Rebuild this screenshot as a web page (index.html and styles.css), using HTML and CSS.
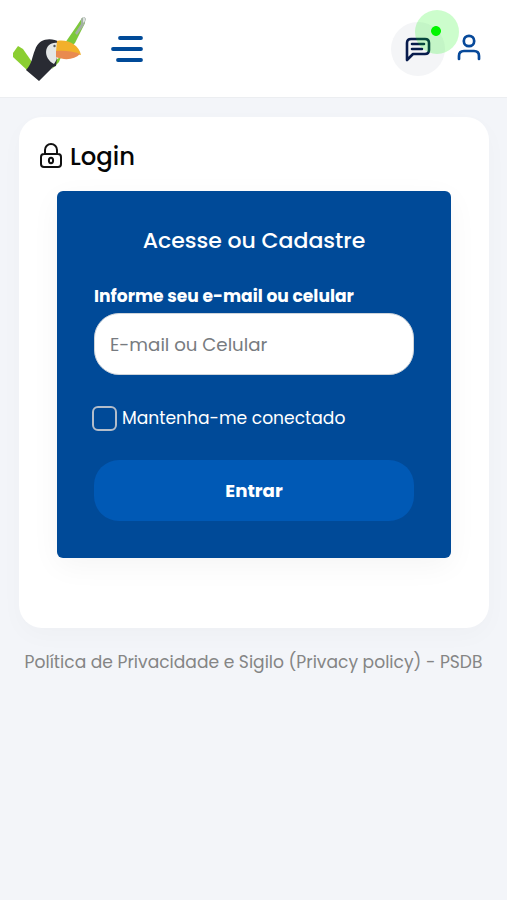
FILE: index.html
```html
<!DOCTYPE html>
<html lang="pt-BR">
<head>
<meta charset="utf-8">
<meta name="viewport" content="width=device-width, initial-scale=1">
<title>Login</title>
<link rel="stylesheet" href="styles.css">
</head>
<body>
<header class="topbar">
  <svg class="logo" viewBox="0 0 76 68" aria-hidden="true">
    <path d="M70 3 64 12 53 28 59 32 63 28 73 8 73 3Z" fill="#7cc83a"/>
    <path d="M49 42 43 45 40 54 47 47Z" fill="#7fca32"/>
    <path d="M69 4Q72 0 74 4L72 10 65 20 63 18 69 9Z" fill="#a3b0a3"/>
    <path d="M71 2Q74 3 73 6L71 8Z" fill="#dce1e0"/>
    <path d="M1 38 6 31 11 34 20 47 16 56 1 42Z" fill="#8bce31"/>
    <path d="M23 35C27 22 41 23 47 27L44 51 41 52 27 66 14 55C20 49 20 42 23 35Z" fill="#292b33"/>
    <path d="M46 28C32 26 30 43 42 49Q46 44 45 37Z" fill="#e4e7e7"/>
    <circle cx="42.5" cy="31" r="1.2" fill="#54585e"/>
    <path d="M45 26C56 24 67 30 69 40Q57 36 44 37Z" fill="#f2b02b"/>
    <path d="M44 36Q57 35 68 39C63 44 54 46 44 42Z" fill="#e98a50"/>
  </svg>
  <svg class="menu" viewBox="0 0 34 30" aria-hidden="true"><path d="M10 4h21M3 15h28M8 26h23"/></svg>
  <div class="actions">
    <div class="chat">
      <svg viewBox="0 0 26 26" aria-hidden="true"><path d="M2 23V6Q2 2 6 2H20Q24 2 24 6V13Q24 17 20 17H8ZM7 7h12M7 12h10"/></svg>
      <span class="pulse"></span>
    </div>
    <svg class="user" viewBox="0 0 24 27" aria-hidden="true"><circle cx="12" cy="7" r="5.2"/><path d="M2 25V22Q2 17 7 17H17Q22 17 22 22V25"/></svg>
  </div>
</header>
<main class="card">
  <h1 class="heading"><svg viewBox="0 0 22 26" aria-hidden="true"><path d="M5 11V7a6 6 0 0 1 12 0v4M4 11H18Q21 11 21 14V21Q21 24 18 24H4Q1 24 1 21V14Q1 11 4 11Z"/><ellipse cx="11" cy="17.5" rx="2.1" ry="2.7"/></svg><span>Login</span></h1>
  <form class="panel">
    <h2 class="title">Acesse ou Cadastre</h2>
    <label class="label" for="contact">Informe seu e-mail ou celular</label>
    <input class="field" id="contact" type="text" placeholder="E-mail ou Celular">
    <label class="remember"><input type="checkbox"><span>Mantenha-me conectado</span></label>
    <button class="submit" type="button">Entrar</button>
  </form>
</main>
<footer class="footer">Política de Privacidade e Sigilo (Privacy policy) - PSDB</footer>
</body>
</html>
```

FILE: styles.css
```css
* { box-sizing: border-box; }
body {
  margin: 0;
  min-height: 900px;
  background: #f3f5f9;
  font-family: Poppins, Inter, sans-serif;
  font-size: 18.2px;
}
svg { display: block; fill: none; stroke-linecap: round; stroke-linejoin: round; }
.topbar {
  display: flex;
  align-items: center;
  height: 98px;
  padding: 0 26px 0 12px;
  background: #fff;
  border-bottom: 1px solid #eceef1;
}
.logo { width: 76px; height: 68px; }
.menu { width: 34px; height: 30px; margin-left: 22px; stroke: #004a98; stroke-width: 3.8; }
.actions { display: flex; align-items: center; margin-left: auto; }
.chat {
  position: relative;
  display: grid;
  place-items: center;
  width: 54px;
  height: 54px;
  border-radius: 50%;
  background: #f4f5f7;
}
.chat svg { width: 26px; height: 26px; margin-top: 2px; stroke: #081c4d; stroke-width: 2.6; }
.pulse {
  position: absolute;
  top: -12px;
  right: -14px;
  width: 44px;
  height: 44px;
  border-radius: 50%;
  background: radial-gradient(circle at 21px 21px, #00f500 4.5px, rgba(0, 245, 0, .2) 5.3px);
}
.user { width: 24px; height: 27px; margin: -3px 0 0 12px; stroke: #07499a; stroke-width: 2.7; }
.card {
  height: 511px;
  margin: 19px 18px 0 19px;
  padding: 20px 38px 0;
  border-radius: 23px;
  background: #fff;
  box-shadow: 0 8px 24px rgba(0, 0, 0, .025);
}
.heading {
  display: flex;
  align-items: center;
  gap: 8px;
  height: 38px;
  margin: 0 0 16px -17px;
  color: #050505;
  font-size: 24.3px;
  font-weight: 500;
}
.heading svg { width: 22px; height: 26px; stroke: #111; stroke-width: 2; }
.panel {
  display: flex;
  flex-direction: column;
  height: 367px;
  padding: 34px 37px 0;
  border-radius: 6px;
  background: #004a98;
  color: #fff;
  box-shadow: 0 8px 30px rgba(0, 0, 0, .045);
}
.title { margin: 0; font-size: 22px; font-weight: 500; line-height: 32px; text-align: center; }
.label { margin-top: 26px; font-size: 17.12px; font-weight: 700; line-height: 26px; }
.field {
  width: 100%;
  height: 62px;
  margin-top: 4px;
  padding: 0 15px;
  border: 1px solid #ced4da;
  border-radius: 25px;
  background: #fff;
  font: inherit;
}
.field::placeholder { color: #777b80; opacity: 1; }
.remember { display: flex; align-items: center; gap: 5px; height: 26px; margin: 30px 0 0 -2px; font-size: 17.12px; }
.remember input { appearance: none; flex: none; width: 25px; height: 25px; margin: 0; border: 2px solid #b3bdca; border-radius: 6px; }
.submit {
  flex: none;
  height: 61px;
  margin-top: 29px;
  border: 0;
  border-radius: 25px;
  background: #0059b5;
  color: #fff;
  font: inherit;
  font-weight: 700;
}
.footer { margin-top: 21px; color: #858585; font-size: 17.12px; line-height: 26px; text-align: center; white-space: nowrap; }
```
